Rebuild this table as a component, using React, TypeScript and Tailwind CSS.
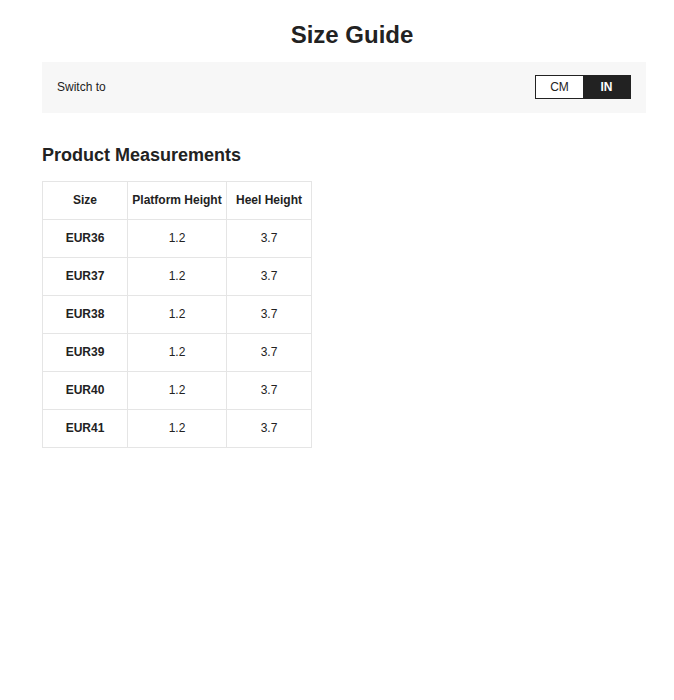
import React from "react";

const rows = ["EUR36", "EUR37", "EUR38", "EUR39", "EUR40", "EUR41"];

export default function App() {
  return (
    <div className="min-h-[700px] bg-white text-[#222] pl-[42px] pt-[20px]" style={{ fontFamily: '"Liberation Sans", Arial, sans-serif' }}>
      <div className="w-[620px]">
        <h1 className="text-center text-[24px] font-bold leading-[30px]">Size Guide</h1>
      </div>
      <div className="w-[604px] mt-[12px] h-[51px] bg-[#f7f7f7] flex items-center justify-between pl-[15px] pr-[15px] pb-[2px]">
        <span className="text-[12px]">Switch to</span>
        <div className="flex h-[24px] border border-[#222]">
          <div className="w-[47px] flex items-center justify-center text-[12px] bg-white">CM</div>
          <div className="w-[47px] flex items-center justify-center text-[12px] font-bold bg-[#222] text-white">IN</div>
        </div>
      </div>
      <h2 className="mt-[30px] text-[18px] font-bold leading-[24px]">Product Measurements</h2>
      <table className="mt-[14px] border-collapse text-[12px]">
        <thead>
          <tr>
            <th className="w-[85px] h-[38px] border border-[#e5e5e5] font-bold text-center p-0 pb-[1px]">Size</th>
            <th className="w-[99px] h-[38px] border border-[#e5e5e5] font-bold text-center p-0 pb-[1px]">Platform Height</th>
            <th className="w-[85px] h-[38px] border border-[#e5e5e5] font-bold text-center p-0 pb-[1px]">Heel Height</th>
          </tr>
        </thead>
        <tbody>
          {rows.map((r) => (
            <tr key={r}>
              <td className="h-[38px] border border-[#e5e5e5] font-bold text-center p-0 pb-[1px]">{r}</td>
              <td className="h-[38px] border border-[#e5e5e5] text-center p-0 pb-[1px]">1.2</td>
              <td className="h-[38px] border border-[#e5e5e5] text-center p-0 pb-[1px]">3.7</td>
            </tr>
          ))}
        </tbody>
      </table>
    </div>
  );
}
